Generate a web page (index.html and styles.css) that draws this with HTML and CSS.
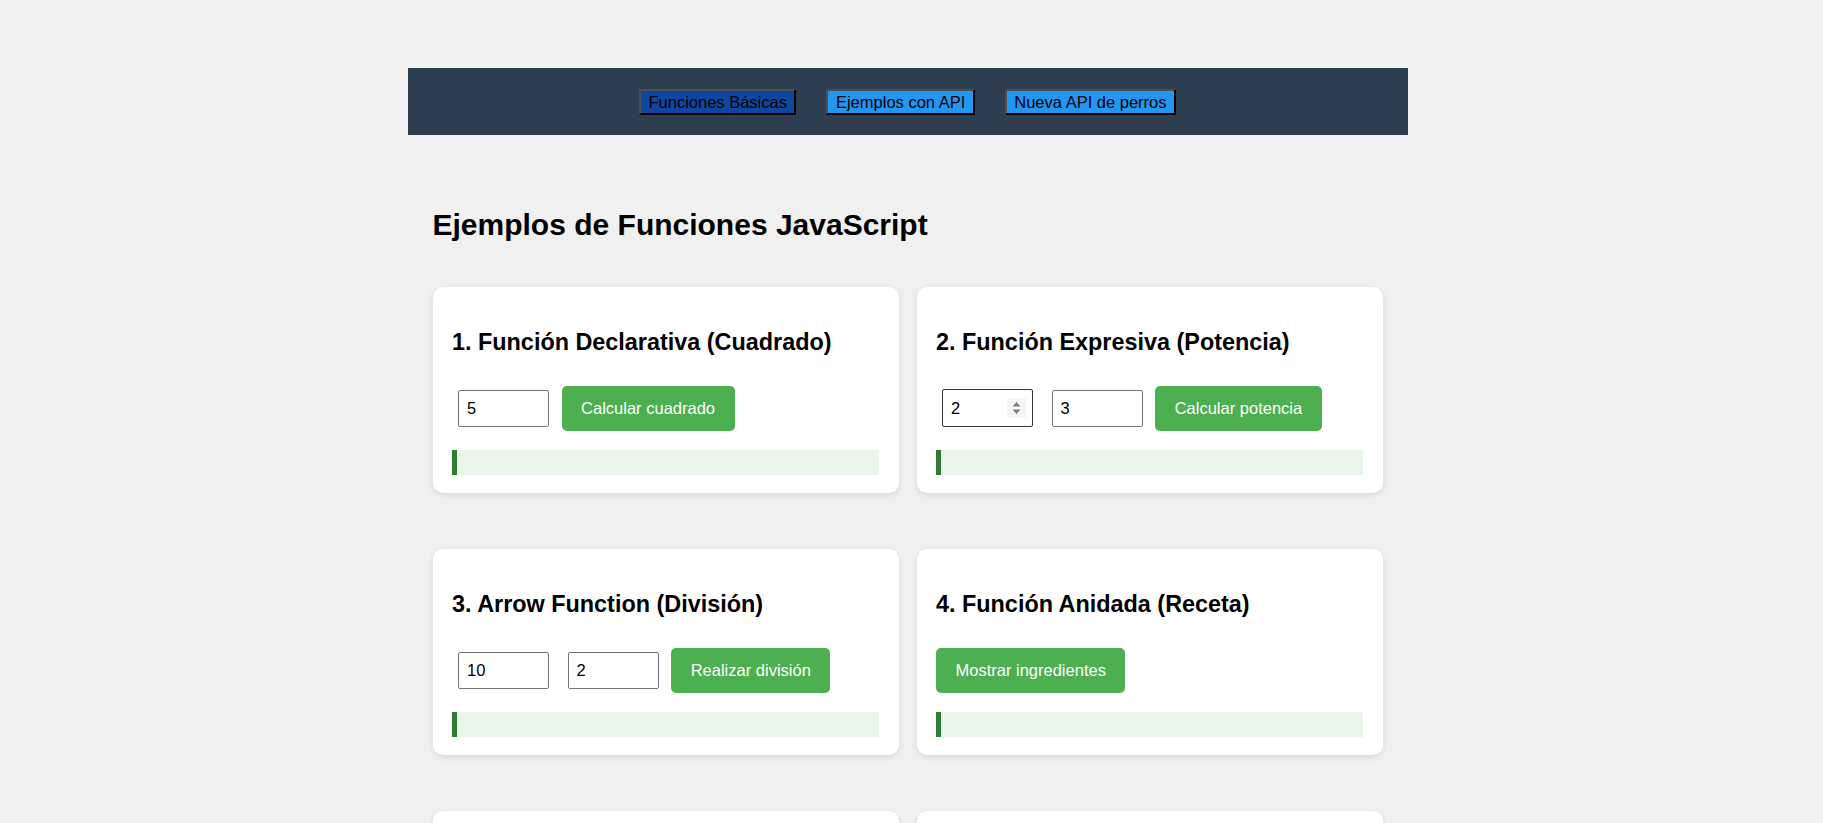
FILE: index.html
```html
<!DOCTYPE html>
<html lang="es">
<head>
<meta charset="utf-8">
<title>Ejemplos de Funciones JavaScript</title>
<link rel="stylesheet" href="styles.css">
</head>
<body>
<div class="page">
  <nav class="topnav">
    <button class="navbtn active">Funciones Básicas</button>
    <button class="navbtn">Ejemplos con API</button>
    <button class="navbtn">Nueva API de perros</button>
  </nav>
  <main class="main">
    <h1 class="title">Ejemplos de Funciones JavaScript</h1>
    <div class="grid">
      <section class="card">
        <h3 class="card-title">1. Función Declarativa (Cuadrado)</h3>
        <div class="row">
          <input class="field" type="text" value="5">
          <button class="action">Calcular cuadrado</button>
        </div>
        <div class="result"></div>
      </section>
      <section class="card">
        <h3 class="card-title">2. Función Expresiva (Potencia)</h3>
        <div class="row">
          <label class="field numbox">
            <input class="numinput" type="text" value="2">
            <svg class="spin" width="19" height="20" viewBox="0 0 19 20"><rect width="19" height="20" fill="#f5f5f5"/><path d="M5.5 8.5h8l-4-4.5z" fill="#7d7d7d"/><path d="M5.5 11.5h8l-4 4.5z" fill="#7d7d7d"/></svg>
          </label>
          <input class="field" type="text" value="3">
          <button class="action">Calcular potencia</button>
        </div>
        <div class="result"></div>
      </section>
      <section class="card">
        <h3 class="card-title">3. Arrow Function (División)</h3>
        <div class="row">
          <input class="field" type="text" value="10">
          <input class="field" type="text" value="2">
          <button class="action">Realizar división</button>
        </div>
        <div class="result"></div>
      </section>
      <section class="card">
        <h3 class="card-title">4. Función Anidada (Receta)</h3>
        <div class="row">
          <button class="action">Mostrar ingredientes</button>
        </div>
        <div class="result"></div>
      </section>
      <section class="card">
        <h3 class="card-title">5. Función Callback (Saludo)</h3>
        <div class="row">
          <input class="field" type="text" value="Ana">
          <button class="action">Saludar</button>
        </div>
        <div class="result"></div>
      </section>
      <section class="card">
        <h3 class="card-title">6. Función Recursiva (Factorial)</h3>
        <div class="row">
          <input class="field" type="text" value="4">
          <button class="action">Calcular factorial</button>
        </div>
        <div class="result"></div>
      </section>
    </div>
  </main>
</div>
</body>
</html>
```
FILE: styles.css
```css
html, body {
  margin: 0;
  padding: 0;
}
body {
  background: #f0f0f0;
  font-family: "Liberation Sans", Arial, sans-serif;
  color: #000;
}
.page {
  width: 1000px;
  margin-top: 68px;
  margin-left: calc(50% - 504px);
}
.topnav {
  height: 67px;
  background: #2c3e50;
  display: flex;
  align-items: center;
  justify-content: center;
}
.navbtn {
  font-family: "Liberation Sans", Arial, sans-serif;
  font-size: 16.5px;
  line-height: 18px;
  color: #000;
  background: #2196f3;
  padding: 2px 7.5px;
  margin: 0 15px;
  border-width: 2px;
  border-style: solid;
  border-color: #4e4e4e #000 #000 #4e4e4e;
  border-radius: 0;
}
.navbtn.active {
  background: #0d47a1;
}
.main {
  padding: 0 25px;
}
.title {
  font-size: 30px;
  line-height: 34px;
  font-weight: bold;
  margin: 73px 0 45px 0;
}
.grid {
  display: grid;
  grid-template-columns: 1fr 1fr;
  column-gap: 18px;
  row-gap: 56.5px;
}
.card {
  background: #fff;
  border-radius: 10px;
  box-shadow: 0 2px 6px rgba(0, 0, 0, 0.1);
  padding: 20px 19.5px 18px 19.5px;
}
.card-title {
  font-size: 23.4px;
  line-height: 27px;
  font-weight: bold;
  margin: 22px 0 30px 0;
}
.row {
  display: flex;
  align-items: center;
}
.field {
  box-sizing: border-box;
  width: 91px;
  font-family: "Liberation Sans", Arial, sans-serif;
  font-size: 16.5px;
  line-height: 18.7px;
  padding: 8px;
  border: 1px solid #767676;
  border-radius: 2px;
  margin: 0 12.6px 0 6px;
  color: #000;
  background: #fff;
  outline: none;
}
.numbox {
  display: flex;
  align-items: center;
  border-color: #333;
  padding-right: 6px;
}
.numinput {
  flex: 1;
  width: 0;
  border: 0;
  padding: 0;
  margin: 0;
  font-family: "Liberation Sans", Arial, sans-serif;
  font-size: 16.5px;
  line-height: 18.7px;
  outline: none;
  color: #000;
}
.spin {
  display: block;
  flex: none;
}
.action {
  font-family: "Liberation Sans", Arial, sans-serif;
  font-size: 16.5px;
  line-height: 19px;
  color: #fff;
  background: #4caf50;
  border: none;
  border-radius: 5px;
  padding: 12.8px 19.5px;
  margin: 0;
}
.result {
  margin-top: 19px;
  height: 25px;
  background: #e8f5e9;
  border-left: 5px solid #2e7d32;
}
```
